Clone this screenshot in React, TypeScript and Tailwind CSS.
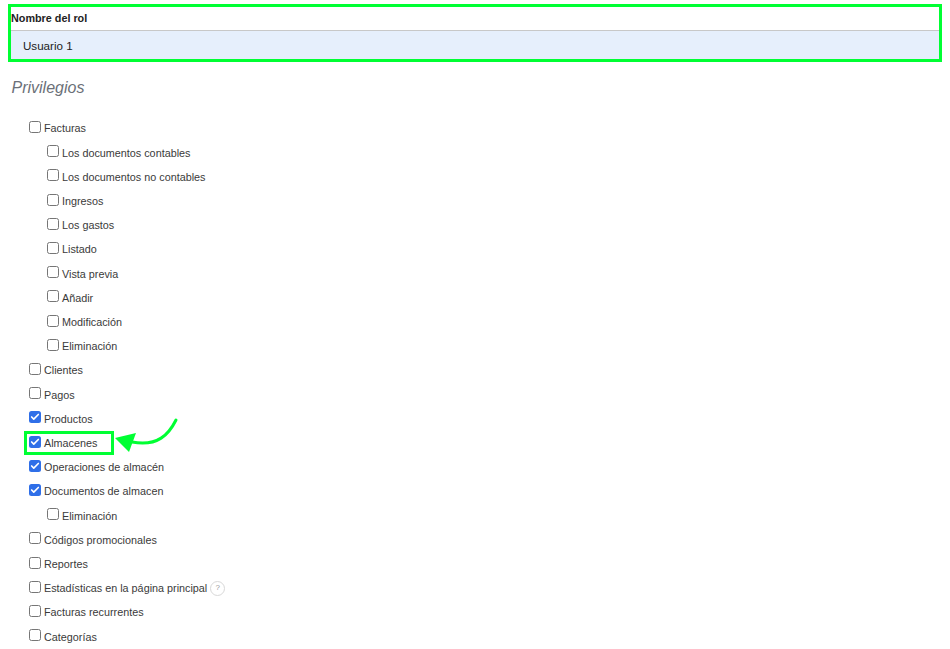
import { Check } from "lucide-react";

type Item = { label: string; checked?: boolean; sub?: boolean; help?: boolean; marked?: boolean };

const items: Item[] = [
  { label: "Facturas" },
  { label: "Los documentos contables", sub: true },
  { label: "Los documentos no contables", sub: true },
  { label: "Ingresos", sub: true },
  { label: "Los gastos", sub: true },
  { label: "Listado", sub: true },
  { label: "Vista previa", sub: true },
  { label: "Añadir", sub: true },
  { label: "Modificación", sub: true },
  { label: "Eliminación", sub: true },
  { label: "Clientes" },
  { label: "Pagos" },
  { label: "Productos", checked: true },
  { label: "Almacenes", checked: true, marked: true },
  { label: "Operaciones de almacén", checked: true },
  { label: "Documentos de almacen", checked: true },
  { label: "Eliminación", sub: true },
  { label: "Códigos promocionales" },
  { label: "Reportes" },
  { label: "Estadísticas en la página principal", help: true },
  { label: "Facturas recurrentes" },
  { label: "Categorías" },
];

function Row({ item }: { item: Item }) {
  return (
    <div className={`relative flex h-[24.21px] shrink-0 items-center gap-[3px] ${item.sub ? "pl-[47px]" : "pl-[29px]"}`}>
      {item.checked ? (
        <span className="mb-[3px] flex h-[12px] w-[12px] items-center justify-center rounded-[2.5px] bg-[#2f6fe8]">
          <Check className="h-[10px] w-[10px] text-white" strokeWidth={4} />
        </span>
      ) : (
        <span className="mb-[3px] h-[12px] w-[12px] rounded-[2.5px] border border-[#767676] bg-white" />
      )}
      <span className="whitespace-nowrap text-[10.8px] text-[#3a3a3a]">{item.label}</span>
      {item.help && (
        <span className="flex h-[15px] w-[15px] items-center justify-center rounded-full border border-[#d8d8d8] text-[8px] text-[#999999]">
          ?
        </span>
      )}
      {item.marked && (
        <>
          <span className="absolute left-[24px] top-[-0.5px] h-[24px] w-[90px] border-[3px] border-[#00ff33]" />
          <svg className="absolute left-[111px] top-[-14px]" width="70" height="50" viewBox="0 0 70 50" fill="none">
            <path d="M65 3C58 17 47 30 21 25" stroke="#00ff33" strokeWidth="3" strokeLinecap="round" />
            <path d="M4 21L25 16L18 35Z" fill="#00ff33" />
          </svg>
        </>
      )}
    </div>
  );
}

export default function App() {
  return (
    <div className="h-[649px] w-[950px] overflow-hidden bg-white pt-[4px] font-['Liberation_Sans',Arial,sans-serif]">
      {/* Role name */}
      <div className="mx-[8px] w-[934px] border-[3px] border-[#00ff33]">
        <div className="flex h-[23px] items-center text-[10.8px] font-bold text-[#222222]">Nombre del rol</div>
        <div className="flex h-[29px] items-center border-t border-[#c8c8c8] bg-[#e6effc] pl-[12px] pt-[1px] text-[11.6px] text-[#222222]">
          Usuario 1
        </div>
      </div>

      <h2 className="mt-[16px] pl-[11.5px] text-[16px] italic leading-[20px] text-[#6b7078]">Privilegios</h2>

      {/* Privileges */}
      <div className="mt-[18.4px] flex flex-col">
        {items.map((item, i) => (
          <Row key={i} item={item} />
        ))}
      </div>
    </div>
  );
}
